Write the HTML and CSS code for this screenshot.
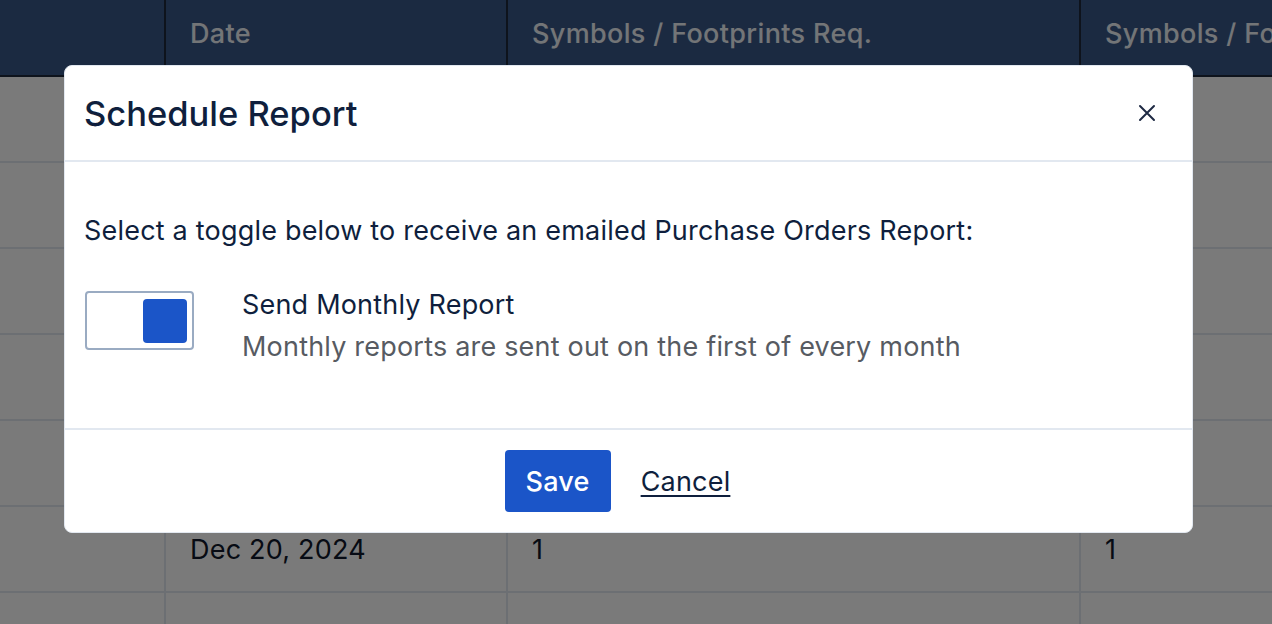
FILE: index.html
```html
<!DOCTYPE html>
<html lang="en">
<head>
<meta charset="utf-8">
<title>Schedule Report</title>
<link rel="stylesheet" href="styles.css">
</head>
<body>
<div class="page">
  <table class="grid">
    <thead>
      <tr>
        <th class="c1"></th>
        <th class="c2">Date</th>
        <th class="c3">Symbols / Footprints Req.</th>
        <th class="c4">Symbols / Footprints Done</th>
      </tr>
    </thead>
    <tbody>
      <tr><td></td><td></td><td></td><td></td></tr>
      <tr><td></td><td></td><td></td><td></td></tr>
      <tr><td></td><td></td><td></td><td></td></tr>
      <tr><td></td><td></td><td></td><td></td></tr>
      <tr><td></td><td></td><td></td><td></td></tr>
      <tr><td></td><td>Dec 20, 2024</td><td>1</td><td>1</td></tr>
      <tr><td></td><td></td><td></td><td></td></tr>
    </tbody>
  </table>

  <div class="backdrop"></div>

  <div class="modal" role="dialog" aria-labelledby="modal-title">
    <div class="modal-header">
      <h2 id="modal-title" class="modal-title">Schedule Report</h2>
      <button class="close" aria-label="Close">
        <svg width="18" height="18" viewBox="0 0 18 18"><path d="M2 2 L16 16 M16 2 L2 16" stroke="#1e2a44" stroke-width="2" stroke-linecap="round" fill="none"/></svg>
      </button>
    </div>
    <div class="modal-body">
      <p class="intro">Select a toggle below to receive an emailed Purchase Orders Report:</p>
      <div class="option">
        <span class="toggle" role="switch" aria-checked="true"><span class="knob"></span></span>
        <div class="option-text">
          <div class="option-title">Send Monthly Report</div>
          <div class="option-desc">Monthly reports are sent out on the first of every month</div>
        </div>
      </div>
    </div>
    <div class="modal-footer">
      <button class="btn-save">Save</button>
      <button class="btn-cancel">Cancel</button>
    </div>
  </div>
</div>
</body>
</html>
```

FILE: styles.css
```css
* { box-sizing: border-box; }
html, body {
  margin: 0;
  padding: 0;
  width: 1272px;
  height: 624px;
  overflow: hidden;
  font-family: Inter, "Noto Sans", "Liberation Sans", sans-serif;
  background: #ffffff;
}
.page {
  position: relative;
  width: 1272px;
  height: 624px;
  overflow: hidden;
}
.grid {
  border-collapse: collapse;
  table-layout: fixed;
  width: 1600px;
  font-size: 27px;
  letter-spacing: 0.2px;
  color: #0f172a;
}
.grid th {
  background: #3a5889;
  color: #f1f5f9;
  font-weight: 500;
  font-size: 27px;
  letter-spacing: 0.35px;
  text-align: left;
  height: 76px;
  padding: 0 24px 8px;
  border-right: 2px solid #1e293b;
  border-bottom: 2px solid #1e293b;
  white-space: nowrap;
  overflow: hidden;
}
.grid th:last-child { border-right: none; }
.grid .c1 { width: 165px; }
.grid .c2 { width: 342px; }
.grid .c3 { width: 573px; }
.grid .c4 { width: 520px; }
.grid td {
  height: 86px;
  padding: 0 24px;
  border-right: 2px solid #e2e8f0;
  border-bottom: 2px solid #e2e8f0;
  white-space: nowrap;
}
.backdrop {
  position: absolute;
  inset: 0;
  background: rgba(0, 0, 0, 0.52);
}
.modal {
  position: absolute;
  left: 64px;
  top: 65px;
  width: 1129px;
  background: #ffffff;
  border: 1px solid #e2e8f0;
  border-radius: 8px;
  color: #0f1f3d;
}
.modal-header {
  height: 96px;
  padding: 0 20px 0 19px;
  display: flex;
  align-items: center;
  justify-content: space-between;
  border-bottom: 2px solid #e2e8f0;
}
.modal-title {
  margin: 0;
  font-size: 34.5px;
  font-weight: 500;
  letter-spacing: 0;
  color: #0f1f3d;
}
.close {
  background: none;
  border: none;
  padding: 0;
  margin-right: 16px;
  width: 18px;
  height: 18px;
  display: flex;
  cursor: pointer;
}
.modal-body {
  padding: 51px 20px 63px;
  border-bottom: 2px solid #e2e8f0;
}
.intro {
  margin: 0 0 38px -1px;
  font-size: 27px;
  letter-spacing: 0.2px;
  line-height: 36px;
  color: #0f1f3d;
}
.option {
  display: flex;
  align-items: flex-start;
  gap: 48px;
}
.toggle {
  margin-top: 4px;
  width: 109px;
  height: 59px;
  border: 2px solid #9aabc2;
  border-radius: 4px;
  display: flex;
  justify-content: flex-end;
  align-items: center;
  padding: 0 5px;
  background: #ffffff;
}
.knob {
  width: 44px;
  height: 44px;
  border-radius: 4px;
  background: #1b55c8;
}
.option-title {
  font-size: 27px;
  letter-spacing: 0.2px;
  line-height: 36px;
  color: #0f1f3d;
}
.option-desc {
  margin-top: 6px;
  font-size: 27px;
  letter-spacing: 0.2px;
  line-height: 36px;
  color: #575b62;
}
.modal-footer {
  padding: 20px 0 20px;
  display: flex;
  justify-content: center;
  align-items: center;
  gap: 8px;
}
.btn-save {
  height: 62px;
  width: 106px;
  padding: 0;
  background: #1b55c8;
  color: #ffffff;
  border: none;
  border-radius: 4px;
  font-family: inherit;
  font-size: 27px;
  letter-spacing: 0.2px;
  font-weight: 500;
}
.btn-cancel {
  height: 62px;
  padding: 0 22px;
  background: none;
  border: none;
  font-family: inherit;
  font-size: 27px;
  letter-spacing: 0.2px;
  color: #0f1f3d;
  text-decoration: underline;
  text-underline-offset: 4px;
  text-decoration-thickness: 2px;
}
```
